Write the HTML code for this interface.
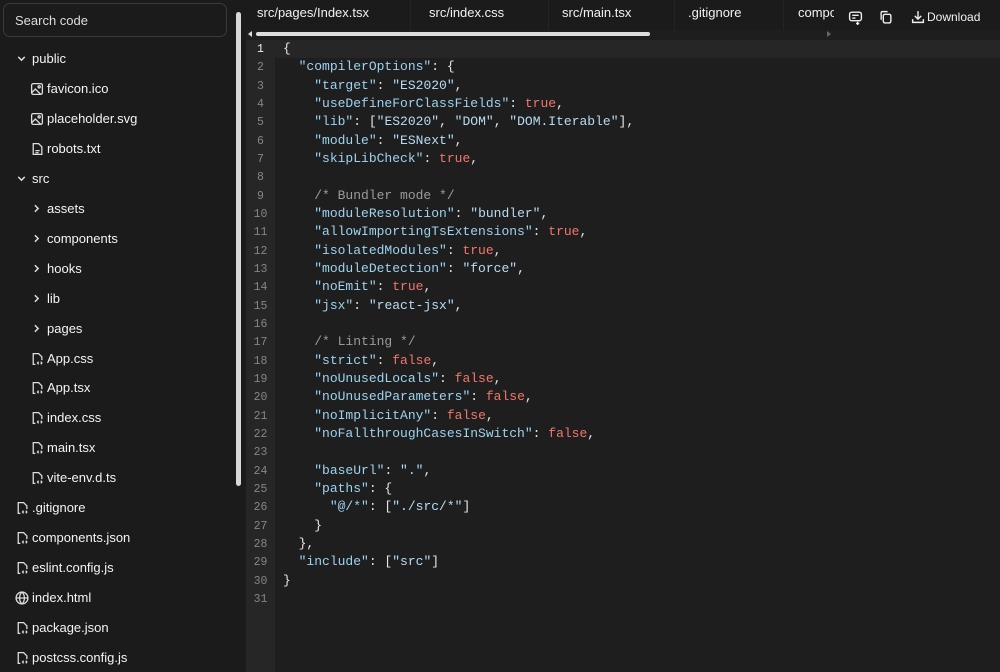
<!DOCTYPE html>
<html><head><meta charset="utf-8"><style>
*{margin:0;padding:0;box-sizing:border-box}
body{width:1000px;height:672px;background:#1b1b1b;overflow:hidden;font-family:"Liberation Sans",sans-serif;color:#eee;position:relative}
#side{position:absolute;left:0;top:0;width:236px;height:672px;background:#1b1b1b}
#search{position:absolute;left:3px;top:3px;width:224px;height:34px;border:1px solid #3a3a3a;border-radius:7px;font-size:13px;color:#ddd;padding:9px 11px}
.row{position:absolute;font-size:13px;color:#f4f4f4;height:20px;line-height:20px}
.row svg{position:absolute;left:-17px;top:3px}
#vs{position:absolute;left:235px;top:0;width:8px;height:672px;background:#1b1b1b}
#thumb{position:absolute;left:236px;top:12px;width:5px;height:474px;background:#d8d8d8;border-radius:3px}
#ed{position:absolute;left:246px;top:0;width:754px;height:672px;background:#1e1e1e}
#tabs{position:absolute;left:0;top:0;width:754px;height:30px;background:#1b1b1b}
.tab{position:absolute;top:5px;font-size:13px;color:#f2f2f2}
.sep{position:absolute;top:0;width:1px;height:30px;background:#242424}
#hs{position:absolute;left:10px;top:32px;width:394px;height:4px;background:#ddd;border-radius:2px}
#gut{position:absolute;left:0;top:40px;width:29px;height:632px;background:#262626}
#code{position:absolute;left:0;top:40px;font-family:"Liberation Mono",monospace;font-size:13px}
.l{height:18.33px;line-height:18.33px;white-space:pre;position:relative}
.n{display:inline-block;width:29px;text-align:center;color:#858585;font-size:11.5px}
.c{position:absolute;left:37px;top:0;color:#e6e6e6}
.k{color:#9dd3f0}.s{color:#b9dcf3}.t{color:#f2766d}.m{color:#9a9a9a}
#hl{position:absolute;left:29px;top:40px;width:725px;height:18px;background:#262626}
</style></head><body>
<div id="side">
<div id="search">Search code</div>
</div>
<div id="vs"></div><div id="thumb"></div>
<div id="ed">
<div id="tabs">
<div class="tab" style="left:11px">src/pages/Index.tsx</div><div class="sep" style="left:164px"></div>
<div class="tab" style="left:183px">src/index.css</div><div class="sep" style="left:302px"></div>
<div class="tab" style="left:316px">src/main.tsx</div><div class="sep" style="left:428px"></div>
<div class="tab" style="left:442px">.gitignore</div><div class="sep" style="left:537px"></div>
<div class="tab" style="left:552px;width:36px;overflow:hidden">components</div>
<svg style="position:absolute;left:602px;top:10px" width="15" height="15" viewBox="0 0 14 14" fill="none" stroke="#eee" stroke-width="1.3"><rect x="1.5" y="2" width="11" height="8" rx="2"/><path d="M4 5h6M4 7.5h3M9 11v3M7.5 12.5h3"/></svg>
<svg style="position:absolute;left:633px;top:10px" width="14" height="14" viewBox="0 0 13 13" fill="none" stroke="#eee" stroke-width="1.3"><rect x="4" y="4" width="7" height="8" rx="1.5"/><path d="M2 9V2.5A1 1 0 0 1 3 1.5h5"/></svg>
<svg style="position:absolute;left:665px;top:10px" width="14" height="14" viewBox="0 0 13 13" fill="none" stroke="#eee" stroke-width="1.3"><path d="M6.5 1v7M3.5 5.5l3 3 3-3M1.5 8.5v3h10v-3"/></svg>
<div class="tab" style="left:681px;top:10px;font-size:12px">Download</div>
</div>
<div style="position:absolute;left:581px;top:31px;width:0;height:0;border-left:4px solid #666;border-top:3px solid transparent;border-bottom:3px solid transparent"></div>
<div style="position:absolute;left:2px;top:31px;width:0;height:0;border-right:4px solid #ddd;border-top:3px solid transparent;border-bottom:3px solid transparent"></div>
<div id="hs"></div>
<div id="gut"></div>
<div id="hl"></div>
<div id="code"></div>
</div>
<script>
const L=[
'{',
'  <k>"compilerOptions"</k>: {',
'    <k>"target"</k>: <s>"ES2020"</s>,',
'    <k>"useDefineForClassFields"</k>: <t>true</t>,',
'    <k>"lib"</k>: [<s>"ES2020"</s>, <s>"DOM"</s>, <s>"DOM.Iterable"</s>],',
'    <k>"module"</k>: <s>"ESNext"</s>,',
'    <k>"skipLibCheck"</k>: <t>true</t>,',
'',
'    <m>/* Bundler mode */</m>',
'    <k>"moduleResolution"</k>: <s>"bundler"</s>,',
'    <k>"allowImportingTsExtensions"</k>: <t>true</t>,',
'    <k>"isolatedModules"</k>: <t>true</t>,',
'    <k>"moduleDetection"</k>: <s>"force"</s>,',
'    <k>"noEmit"</k>: <t>true</t>,',
'    <k>"jsx"</k>: <s>"react-jsx"</s>,',
'',
'    <m>/* Linting */</m>',
'    <k>"strict"</k>: <t>false</t>,',
'    <k>"noUnusedLocals"</k>: <t>false</t>,',
'    <k>"noUnusedParameters"</k>: <t>false</t>,',
'    <k>"noImplicitAny"</k>: <t>false</t>,',
'    <k>"noFallthroughCasesInSwitch"</k>: <t>false</t>,',
'',
'    <k>"baseUrl"</k>: <s>"."</s>,',
'    <k>"paths"</k>: {',
'      <k>"@/*"</k>: [<s>"./src/*"</s>]',
'    }',
'  },',
'  <k>"include"</k>: [<s>"src"</s>]',
'}',
''];
let h='';
L.forEach((x,i)=>{x=x.replace(/<(k|s|t|m)>/g,'<span class="$1">').replace(/<\/(k|s|t|m)>/g,'</span>');
h+='<div class="l"><span class="n"'+(i==0?' style="color:#eee"':'')+'>'+(i+1)+'</span><span class="c">'+x+'</span></div>';});
document.getElementById('code').innerHTML=h;
const chev='<svg width="13" height="13" viewBox="0 0 12 12" fill="none" stroke="#ddd" stroke-width="1.4"><path d="M3 4.5l3 3 3-3"/></svg>';
const chevR='<svg width="13" height="13" viewBox="0 0 12 12" fill="none" stroke="#ddd" stroke-width="1.4"><path d="M4.5 3l3 3-3 3"/></svg>';
const img='<svg width="14" height="14" viewBox="0 0 13 13" fill="none" stroke="#ddd" stroke-width="1.2"><rect x="1.5" y="1.5" width="10" height="10" rx="1.5"/><path d="M1.5 10l3.5-3.5 5 5"/><circle cx="8.5" cy="4.5" r="1"/></svg>';
const file='<svg width="14" height="14" viewBox="0 0 13 13" fill="none" stroke="#ddd" stroke-width="1.2"><path d="M3 1.5h5l3 3v7H3z"/><path d="M5 8h4M5 10h3"/></svg>';
const code='<svg width="14" height="14" viewBox="0 0 13 13" fill="none" stroke="#ddd" stroke-width="1.2"><path d="M5 11.5H3v-10h5l3 3v3"/><path d="M8 9l-1 1.2 1 1.2M10 9l1 1.2-1 1.2"/></svg>';
const globe='<svg width="14" height="14" viewBox="0 0 13 13" fill="none" stroke="#ddd" stroke-width="1.2"><circle cx="6.5" cy="6.5" r="5.5"/><path d="M1 6.5h11M6.5 1c-3 3-3 8 0 11M6.5 1c3 3 3 8 0 11"/></svg>';
const rows=[[32,'public',chev],[47,'favicon.ico',img],[47,'placeholder.svg',img],[47,'robots.txt',file],[32,'src',chev],[47,'assets',chevR],[47,'components',chevR],[47,'hooks',chevR],[47,'lib',chevR],[47,'pages',chevR],[47,'App.css',code],[47,'App.tsx',code],[47,'index.css',code],[47,'main.tsx',code],[47,'vite-env.d.ts',code],[32,'.gitignore',code],[32,'components.json',code],[32,'eslint.config.js',code],[32,'index.html',globe],[32,'package.json',code],[32,'postcss.config.js',code]];
let s='';
rows.forEach((r,i)=>{s+='<div class="row" style="left:'+r[0]+'px;top:'+(49+i*29.95)+'px">'+r[2]+r[1]+'</div>';});
document.getElementById('side').insertAdjacentHTML('beforeend',s);
</script>
</body></html>
